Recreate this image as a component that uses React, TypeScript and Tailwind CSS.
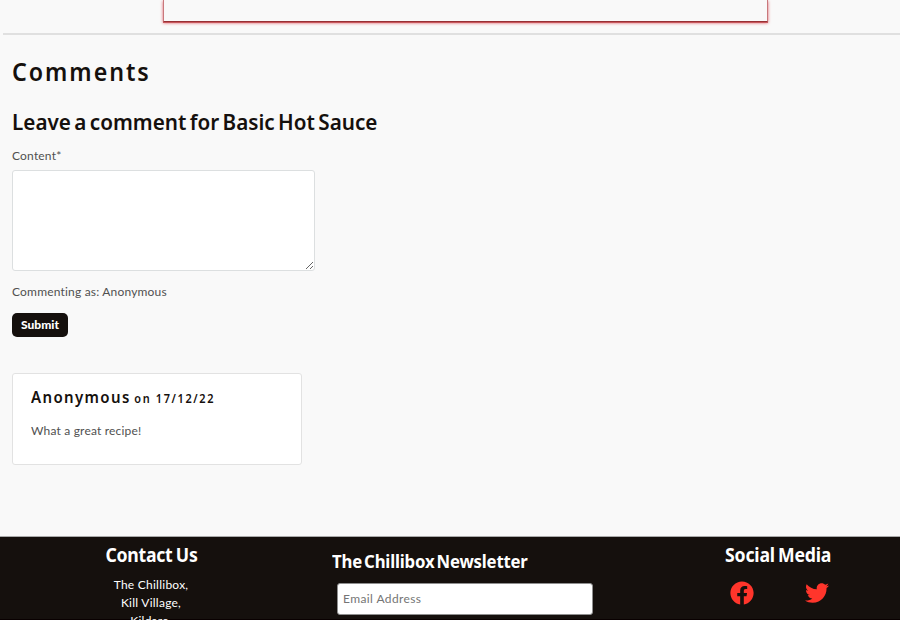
import { FaFacebook, FaTwitter } from "react-icons/fa";

const heading = "w-fit origin-left font-['Noto_Sans','Open_Sans',sans-serif] text-[#15100d] whitespace-nowrap";
const body = "font-['Lato',sans-serif] text-[12px] text-[#505050] tracking-[0.19px] whitespace-nowrap";

function RecipeEnd() {
  return (
    <div className="h-[35px] pl-[3px]">
      <div className="ml-[160px] h-[22px] w-[605px] border-r border-b border-l border-[#c9787c] border-b-[#983034] shadow-[0_1px_0_#c8585d,0_1px_3px_#e0606a]" />
      <div className="mt-[11px] h-[2px] bg-[#e0e0e0]" />
    </div>
  );
}

function CommentForm() {
  return (
    <form className="flex flex-col items-start">
      <h3 className={`${heading} mt-[17px] h-[31px] scale-x-[0.94] text-[22px] leading-[30px] font-semibold [word-spacing:-2.1px]`}>
        Leave a comment for Basic Hot Sauce
      </h3>
      <label className={`${body} mt-[10px] h-[18px] leading-[18px]`}>Content*</label>
      <textarea className="mt-[5px] block h-[101px] w-[303px] resize rounded-[3px] border border-[#dcdfe0] bg-white" />
      <p className={`${body} mt-[12px] h-[18px] leading-[18px]`}>Commenting as: Anonymous</p>
      <button
        type="button"
        className="mt-[12px] h-[24px] w-[56px] rounded-[5px] bg-[#15100d] font-['Lato',sans-serif] text-[12px] font-black text-white"
      >
        Submit
      </button>
    </form>
  );
}

function Comment() {
  return (
    <article className="mt-[36px] h-[92px] w-[290px] rounded-[3px] border border-[#e2e2e2] bg-white px-[18px] pt-[11px]">
      <h4 className={`${heading} h-[25px] scale-x-[0.91] text-[16.5px] leading-[24px] font-semibold tracking-[1.5px]`}>
        Anonymous<span className="ml-[4px] text-[12px] tracking-[1.8px]">on 17/12/22</span>
      </h4>
      <p className={`${body} mt-[12px] leading-[18px]`}>What a great recipe!</p>
    </article>
  );
}

const footHeading = "w-fit font-['Noto_Sans','Open_Sans',sans-serif] font-bold leading-[24px] text-white whitespace-nowrap";

function Footer() {
  return (
    <footer className="relative flex h-[84px] overflow-hidden border-t border-[#aaa] bg-[#15100d] shadow-[inset_0_-1px_0_#090000]">
      <section className="flex w-[302px] shrink-0 flex-col items-center pt-[6px]">
        <h4 className={`${footHeading} scale-x-[0.93] text-[19px] tracking-[-0.3px] [word-spacing:-1px]`}>Contact Us</h4>
        <address className="mt-[9px] text-center font-['Lato',sans-serif] text-[12px] leading-[18px] tracking-[0.25px] whitespace-nowrap text-white not-italic">
          The Chillibox,
          <br />
          Kill Village,
          <br />
          Kildare,
        </address>
      </section>
      <section className="w-[355px] shrink-0 pt-[12px] pl-[30px]">
        <h4 className={`${footHeading} origin-left scale-x-[0.93] text-[18px] tracking-[-0.2px] [word-spacing:-2.2px]`}>
          The Chillibox Newsletter
        </h4>
        <input
          placeholder="Email Address"
          className="mt-[10px] ml-[5px] block h-[32px] w-[256px] rounded-[3px] border border-[#8f8f8f] bg-white px-[5px] pb-[2px] font-['Lato',sans-serif] text-[12px] tracking-[0.4px] placeholder:text-[#757575]"
        />
      </section>
      <section className="flex w-[243px] shrink-0 flex-col items-center pt-[6px]">
        <h4 className={`${footHeading} scale-x-[0.93] text-[19px] tracking-[-0.2px] [word-spacing:-1.5px]`}>Social Media</h4>
        <div className="mt-[14px] ml-[2px] flex w-[99px] justify-between text-[24px] text-[#ff352b]">
          <FaFacebook />
          <FaTwitter />
        </div>
      </section>
    </footer>
  );
}

export default function App() {
  return (
    <div className="flex h-[620px] w-[900px] flex-col overflow-hidden bg-[#f9f9f9]">
      <RecipeEnd />
      <main className="flex-1 px-[12px] pt-[20px]">
        <h2 className={`${heading} h-[34px] scale-x-[0.93] text-[25px] leading-[33px] font-semibold tracking-[2.1px]`}>
          Comments
        </h2>
        <CommentForm />
        <Comment />
      </main>
      <Footer />
    </div>
  );
}
